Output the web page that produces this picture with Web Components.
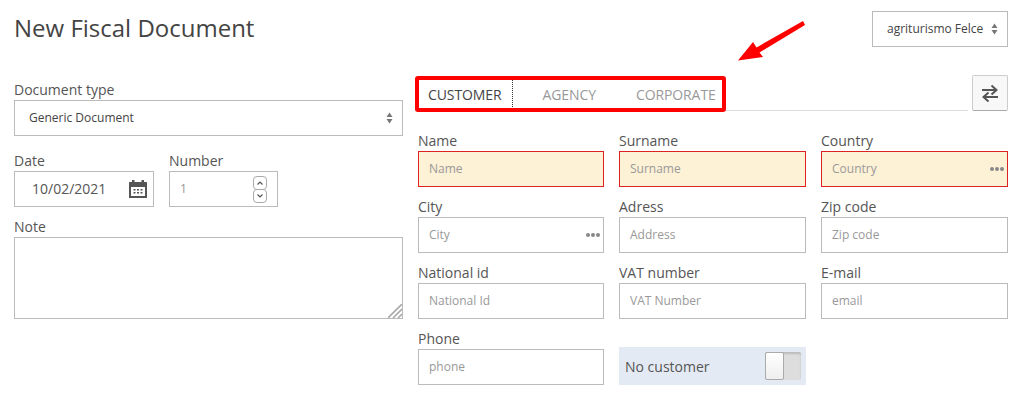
<!DOCTYPE html>
<html>
<head>
<meta charset="utf-8">
<title>New Fiscal Document</title>
<style>
  html, body { margin: 0; background: #fff; }
  body { font-family: "Open Sans", "Liberation Sans", sans-serif; color: #555; overflow: hidden; }
</style>
</head>
<body>
<fd-page>
  <fd-select slot="company" compact>agriturismo Felce</fd-select>

  <fd-field slot="left" label="Document type"><fd-select>Generic Document</fd-select></fd-field>
  <div slot="left" style="display:flex;gap:15px;margin-top:15px">
    <fd-field label="Date" style="width:140px"><fd-box filled indent="17"><span style="font-size:14px">10/02/2021</span><fd-calendar slot="end"></fd-calendar></fd-box></fd-field>
    <fd-field label="Number" style="width:109px"><fd-box>1<fd-spinner slot="end"></fd-spinner></fd-box></fd-field>
  </div>
  <fd-field slot="left" label="Note" style="margin-top:10px"><fd-note></fd-note></fd-field>

  <fd-tabs slot="right"></fd-tabs>
  <fd-form slot="right">
    <fd-field label="Name"><fd-box invalid>Name</fd-box></fd-field>
    <fd-field label="Surname"><fd-box invalid>Surname</fd-box></fd-field>
    <fd-field label="Country"><fd-box invalid>Country<fd-dots slot="end"></fd-dots></fd-box></fd-field>
    <fd-field label="City"><fd-box>City<fd-dots slot="end"></fd-dots></fd-box></fd-field>
    <fd-field label="Adress"><fd-box>Address</fd-box></fd-field>
    <fd-field label="Zip code"><fd-box>Zip code</fd-box></fd-field>
    <fd-field label="National id"><fd-box>National Id</fd-box></fd-field>
    <fd-field label="VAT number"><fd-box>VAT Number</fd-box></fd-field>
    <fd-field label="E-mail"><fd-box>email</fd-box></fd-field>
    <fd-field label="Phone"><fd-box>phone</fd-box></fd-field>
    <fd-toggle>No customer</fd-toggle>
  </fd-form>
</fd-page>

<script>
  // small helper, every component is just a shadow root with fixed markup
  function define(name, html, setup) {
    customElements.define(name, class extends HTMLElement {
      constructor() {
        super();
        this.attachShadow({ mode: "open" }).innerHTML = html;
      }
      connectedCallback() {
        if (setup) setup(this, this.shadowRoot);
      }
    });
  }

  const carets = `<svg width="7" height="12" viewBox="0 0 7 12"><path d="M3.5 0.5 6.5 5H0.5Z M0.5 7H6.5L3.5 11.5Z" fill="#777"/></svg>`;

  define("fd-page", `
    <style>
      :host { display: block; width: 1018px; height: 400px; box-sizing: border-box; padding: 11px 10px 0 14px; position: relative; }
      header { display: flex; justify-content: space-between; height: 36px; }
      h1 { margin: 0; font-size: 24px; font-weight: 400; line-height: 34px; color: #444; }
      main { display: grid; grid-template-columns: 389px 590px; column-gap: 15px; margin-top: 28px; }
      .left { padding-top: 5px; }
      .arrow { position: absolute; left: 730px; top: 15px; }
      ::slotted(fd-select[compact]) { width: 136px; }
    </style>
    <header><h1>New Fiscal Document</h1><slot name="company"></slot></header>
    <main>
      <div class="left"><slot name="left"></slot></div>
      <div><slot name="right"></slot></div>
    </main>
    <svg class="arrow" width="80" height="50" viewBox="0 0 80 50">
      <path d="M73 6 75 10 29.5 37.5 33 42 8 45.5 23 27 26.5 32.5Z" fill="#f00"/>
    </svg>`);

  define("fd-field", `
    <style>
      :host { display: block; }
      label { display: block; height: 20px; font-size: 14px; line-height: 20px; color: #555; }
    </style>
    <label></label><slot></slot>`,
    (el, root) => { root.querySelector("label").textContent = el.getAttribute("label"); });

  define("fd-box", `
    <style>
      :host { display: flex; align-items: center; justify-content: space-between; box-sizing: border-box; height: 36px; border: 1px solid #bbb; padding-left: 10px; font-size: 12px; color: #999; background: #fff; }
      :host([invalid]) { border-color: #d22; background: #fdf1d6; }
      :host([filled]) { color: #555; }
      .text { padding-bottom: 2px; }
    </style>
    <span class="text"><slot></slot></span><slot name="end"></slot>`,
    (el) => { if (el.hasAttribute("indent")) el.style.paddingLeft = el.getAttribute("indent") + "px"; });

  define("fd-select", `
    <style>
      :host { display: flex; align-items: center; justify-content: space-between; box-sizing: border-box; height: 36px; border: 1px solid #bbb; padding: 0 9px 0 14px; font-size: 12px; color: #444; background: #fff; }
      .text { padding-bottom: 2px; }
      svg { display: block; flex: none; }
    </style>
    <span class="text"><slot></slot></span>${carets}`);

  define("fd-calendar", `
    <style>:host { display: block; margin-right: 6px; } svg { display: block; }</style>
    <svg width="18" height="18" viewBox="0 0 18 18">
      <path fill="#555" fill-rule="evenodd" d="M3 0H5.5V2H12.5V0H15V2H17.5Q18 2 18 2.5V17.5Q18 18 17.5 18H0.5Q0 18 0 17.5V2.5Q0 2 0.5 2H3Z M2 7V16H16V7Z"/>
      <path fill="#555" d="M4.5 9H6.5V10.5H4.5Z M8 9H10V10.5H8Z M11.5 9H13.5V10.5H11.5Z M4.5 12H6.5V13.5H4.5Z M8 12H10V13.5H8Z M11.5 12H13.5V13.5H11.5Z"/>
    </svg>`);

  define("fd-spinner", `
    <style>
      :host { display: flex; flex-direction: column; margin-right: 10px; }
      div { width: 12px; height: 12px; border: 1px solid #aaa; border-radius: 4px; display: flex; align-items: center; justify-content: center; background: #fff; }
      div + div { margin-top: -1px; }
      svg { display: block; }
    </style>
    <div><svg width="6" height="4" viewBox="0 0 6 4"><path d="M0.5 3.5 3 1 5.5 3.5" fill="none" stroke="#555" stroke-width="1.2"/></svg></div>
    <div><svg width="6" height="4" viewBox="0 0 6 4"><path d="M0.5 0.5 3 3 5.5 0.5" fill="none" stroke="#555" stroke-width="1.2"/></svg></div>`);

  define("fd-dots", `
    <style>:host { display: block; margin-right: 3px; } svg { display: block; }</style>
    <svg width="14" height="4" viewBox="0 0 14 4"><circle cx="2" cy="2" r="2" fill="#888"/><circle cx="7" cy="2" r="2" fill="#888"/><circle cx="12" cy="2" r="2" fill="#888"/></svg>`);

  define("fd-note", `
    <style>
      :host { display: block; box-sizing: border-box; height: 82px; border: 1px solid #bbb; position: relative; background: #fff; }
      svg { position: absolute; right: 0; bottom: 0; }
    </style>
    <svg width="14" height="14" viewBox="0 0 14 14"><path d="M0 14 14 0 M5 14 14 5 M10 14 14 10" stroke="#aaa" stroke-width="1.6" fill="none"/></svg>`);

  define("fd-tabs", `
    <style>
      :host { display: flex; justify-content: space-between; height: 36px; position: relative; }
      .strip { flex: none; width: 553px; margin-left: -3px; padding-left: 3px; box-sizing: border-box; height: 36px; border-bottom: 1px solid #ddd; display: flex; font-size: 14px; letter-spacing: -0.1px; color: #999; }
      .tab { height: 35px; line-height: 40px; }
      .tab.on { color: #444; padding: 0 10px; height: 27px; line-height: 29px; margin-top: 5px; border-right: 1px dotted #333; }
      .tab.on + .tab { margin-left: 30px; }
      .tab + .tab + .tab { margin-left: 40px; }
      .mark { position: absolute; left: -3px; top: 1px; width: 311px; height: 36px; box-sizing: border-box; border: 4px solid #f00; border-radius: 3px; }
      button { width: 36px; height: 36px; box-sizing: border-box; padding: 0; border: 1px solid #ccc; border-bottom-color: #aaa; border-radius: 2px; background: #f8f8f8; display: flex; align-items: center; justify-content: center; }
      svg { display: block; }
    </style>
    <div class="strip">
      <div class="tab on">CUSTOMER</div>
      <div class="tab">AGENCY</div>
      <div class="tab">CORPORATE</div>
    </div>
    <div class="mark"></div>
    <button aria-label="Swap">
      <svg width="16" height="18" viewBox="0 0 16 18"><path d="M0 6H14 M9.5 1.5 14.5 6 9.5 10.5 M16 13H2 M6.5 8.5 1.5 13 6.5 17.5" fill="none" stroke="#555" stroke-width="2"/></svg>
    </button>`);

  define("fd-form", `
    <style>
      :host { display: grid; grid-template-columns: 186px 187px 187px; column-gap: 15px; row-gap: 10px; margin-top: 20px; }
    </style>
    <slot></slot>`);

  define("fd-toggle", `
    <style>
      :host { display: flex; align-items: center; justify-content: space-between; align-self: end; box-sizing: border-box; height: 38px; padding: 0 5px 0 6px; background: #e4eaf3; font-size: 14px; color: #555; }
      .track { display: flex; width: 36px; height: 28px; background: #ddd; border-radius: 2px; box-shadow: inset 0 2px 2px #bbb; }
      .knob { width: 19px; box-sizing: border-box; border: 1px solid #aaa; border-radius: 2px; background: linear-gradient(#fff, #eee); }
    </style>
    <span><slot></slot></span>
    <div class="track"><div class="knob"></div></div>`);
</script>
</body>
</html>
